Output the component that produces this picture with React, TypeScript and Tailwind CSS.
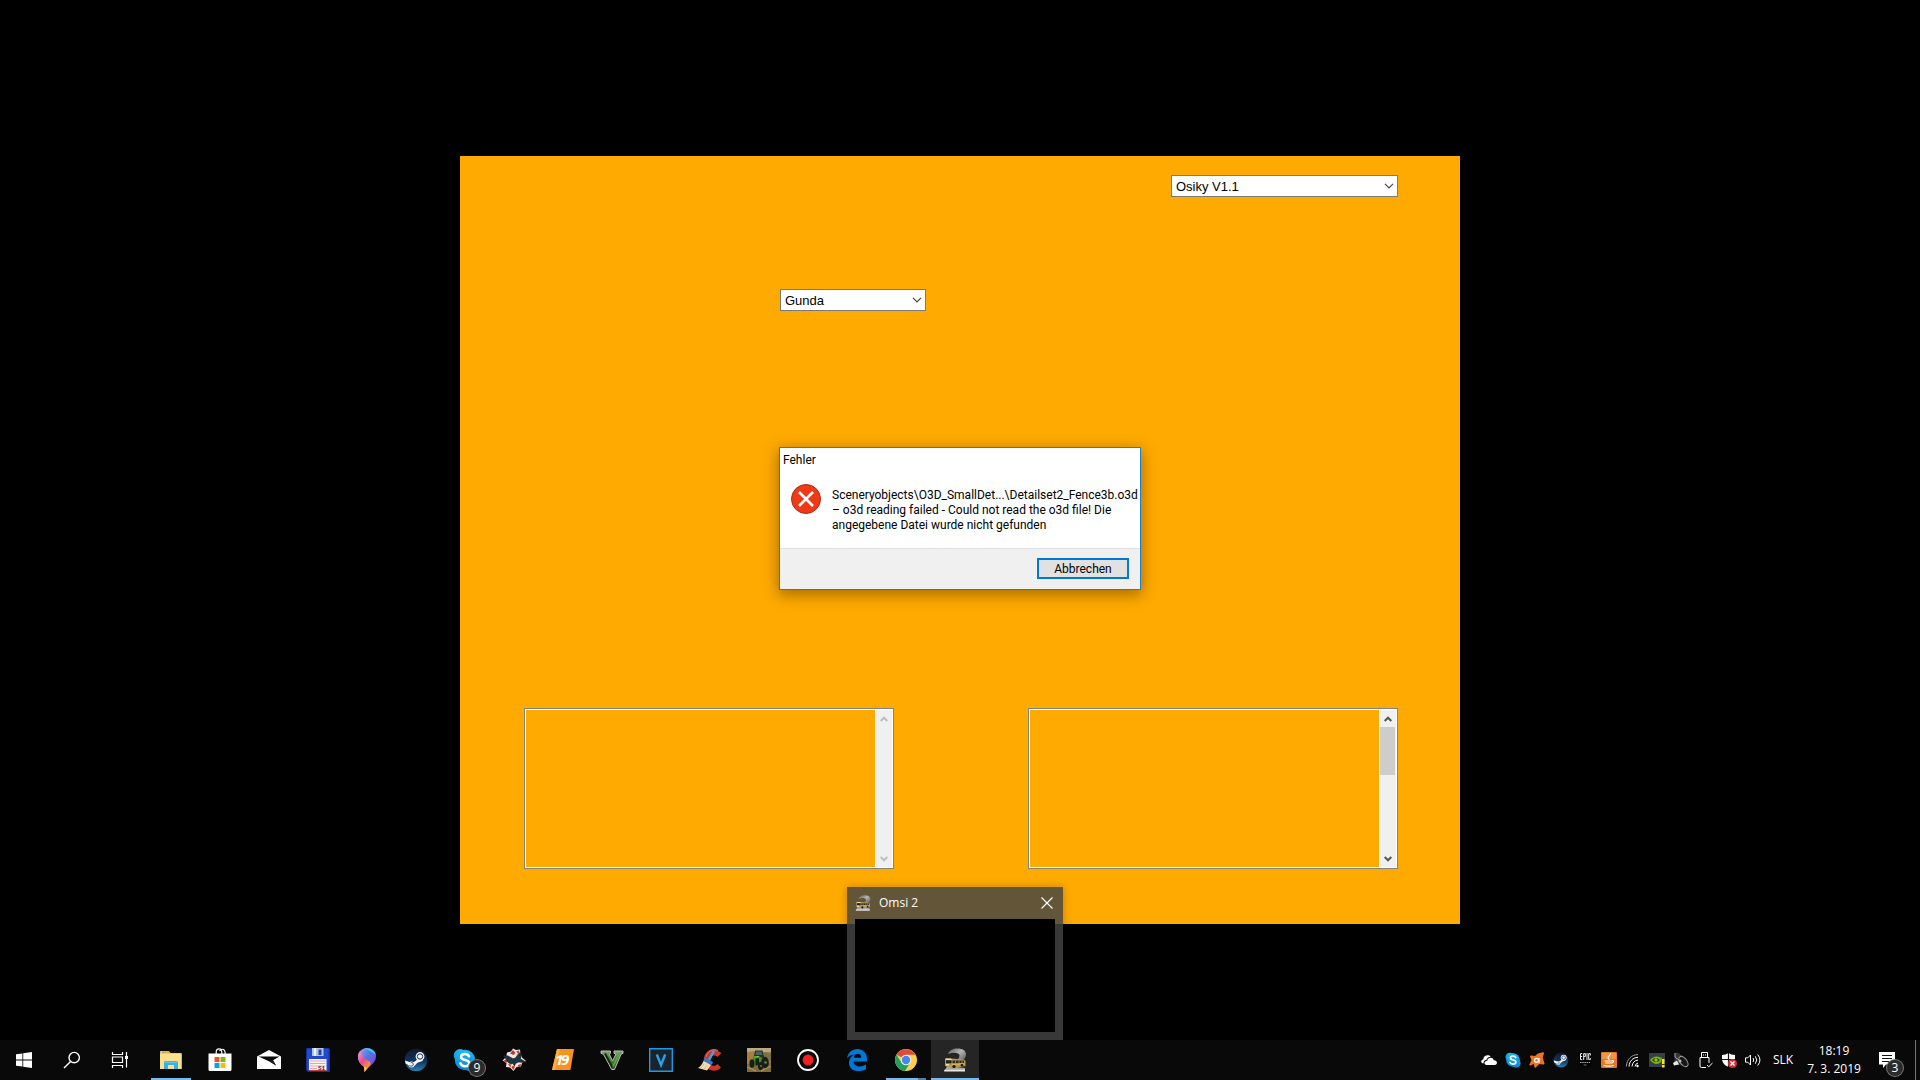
import React from 'react';

type P = { children: React.ReactNode; box?: string; className?: string };
const Svg = ({ children, box = '0 0 24 24', className = 'size-6' }: P) => (
  <svg viewBox={box} className={className} fill="none" aria-hidden="true">{children}</svg>
);

const StartIcon = () => (
  <Svg><g fill="#fff"><path d="M4 6.3 10.4 5.4V11.5H4z" /><path d="M11.2 5.3 20 4V11.5H11.2z" /><path d="M4 12.4H10.4V18.5L4 17.7z" /><path d="M11.2 12.4H20V20L11.2 18.7z" /></g></Svg>
);
const SearchIcon = () => (
  <Svg><g stroke="#fff" strokeWidth="1.4"><circle cx="14.2" cy="9.6" r="5.2" /><path d="M10.6 13.4 4 20" /></g></Svg>
);
const TaskViewIcon = () => (
  <Svg><g stroke="#fff" strokeWidth="1.2"><path d="M4.5 4v2.5h10V4M4.500 20v-2.500h10V20M4.500 9h10v5.500h-10zM18.500 4v15.500" /></g><path d="M17 8h3v3h-3z" fill="#fff" /></Svg>
);
const ExplorerIcon = () => (
  <Svg>
    <path d="M1 3.500q0-.5.500-.5H10l1.500 2H22q.6 0 .6.600V20.500q0 .5-.6.500H1.500q-.5 0-.5-.5z" fill="#e8b33c" />
    <path d="M1 5.500h21.600v15q0 .5-.6.500H1.500q-.5 0-.5-.5z" fill="#fde08c" />
    <path d="M2 3.700h3v1H2z" fill="#fff" /><path d="M3 3.700h2v1H3z" fill="#2f9cc9" />
    <path d="M5 21v-6.500q0-1.500 1.500-1.500h11q1.500 0 1.500 1.500V21h-4v-4H9v4z" fill="#38b0e3" />
    <path d="M6 13.800h12v1H6z" fill="#69cdf2" />
  </Svg>
);
const StoreIcon = () => (
  <Svg>
    <path d="M8.200 6V4.500Q8.200.8 11 .8t2.800 3.700V6M11.500 3Q14-.2 16.500 2.500q.7 1 .7 3.500" stroke="#fff" strokeWidth="1.200" />
    <path d="M.5 5.500h23V21.500q0 1.500-1.500 1.500H2Q.5 23 .5 21.500z" fill="#fff" />
    <path d="M6.500 9h5v5h-5z" fill="#f25022" /><path d="M12.500 9h5v5h-5z" fill="#7fba00" /><path d="M6.500 15h5v5h-5z" fill="#00a4ef" /><path d="M12.500 15h5v5h-5z" fill="#ffb900" />
  </Svg>
);
const MailIcon = () => (
  <Svg><path d="M0 8.500 12 2l12 6.500V21H0z" fill="#fff" /><path d="M1.500 8.500h21L16 12.200l3 5.400-6.500-4z" fill="#090909" /><path d="M12.500 13.600 16 12.200l3 5.400z" fill="#222" /></Svg>
);
const FloppyIcon = () => (
  <Svg>
    <path d="M1 0h21.500L24 1.500V24H2L0 22V1z" fill="#182f9e" /><path d="M1 .8h21.500v22H2L1 21.500z" fill="#1f49d2" />
    <path d="M6 0h11.500v8H6z" fill="#b7c5d6" /><path d="M8 0h2v8H8z" fill="#e9f3fa" /><path d="M12.500 1.500h3v5.500h-3z" fill="#1c43b5" />
    <path d="M3 11h17.500v12H3z" fill="#fdf4f2" /><path d="M4 13h15.500M4 15.500h15.500M4 18h15.500M4 20.500h7" stroke="#e9a5a5" />
    <path d="M3 22.500h17.500" stroke="#b83b4c" /><text x="12" y="21.500" fontSize="6" fontWeight="700" fill="#333" fontFamily="Liberation Mono">S1</text>
  </Svg>
);
const PaintIcon = () => (
  <Svg>
    <defs>
      <linearGradient id="pa" x1="0" y1="0" x2="1" y2=".8"><stop stopColor="#c99bf1" /><stop offset=".45" stopColor="#497fe8" /><stop offset="1" stopColor="#9634c9" /></linearGradient>
      <linearGradient id="pb" x1="0" y1="0" x2=".7" y2="1"><stop stopColor="#f0a3d8" /><stop offset=".5" stopColor="#e54b91" /><stop offset="1" stopColor="#ffa51f" /></linearGradient>
    </defs>
    <path d="M12 0c6 0 9 4 9 8.500C21 15 14 18 9.500 24L9 19C5 16 3 13 3 9c0-5 4-9 9-9z" fill="url(#pa)" />
    <path d="M3 9c0-3 1-5 2.500-6.500C6 8 10 11 14 13c2 1 2 3 .5 4.700C12.500 20 11 22 9.500 24L9 19C5 16 3 13 3 9z" fill="url(#pb)" />
    <path d="M9 .5c6-1.500 11 2.500 12 7-2-3-6-5-12-7z" fill="#35d3ee" />
    <path d="M9 18.500l3 1.500-2.500 4z" fill="#ffc52f" />
  </Svg>
);
const SteamIcon = ({ className }: { className?: string }) => (
  <Svg className={className}>
    <defs><linearGradient id="st" x1="0" y1="0" x2="0" y2="1"><stop stopColor="#15172e" /><stop offset=".55" stopColor="#11335c" /><stop offset="1" stopColor="#2d7fb5" /></linearGradient></defs>
    <circle cx="12" cy="12" r="11.200" fill="url(#st)" />
    <path d="M1 12.500l7.200 2.500 4-2.600 2.600-4.500 4.700 2-1 3-5 1.800-3.200 3.200Q8.500 20 6 18L1.600 15.500z" fill="#f4f7fa" />
    <circle cx="16" cy="8.500" r="4.400" fill="#f4f7fa" /><circle cx="16" cy="8.500" r="2.700" stroke="#17325a" strokeWidth="1" />
    <circle cx="7.500" cy="16.500" r="2.900" fill="#f4f7fa" /><path d="M5.500 17.400c1.500 1.500 3.800.8 3.800-1s-1.600-2.200-2.500-1.600" stroke="#17325a" strokeWidth=".9" />
  </Svg>
);
const SkypeIcon = ({ className }: { className?: string }) => (
  <Svg className={className}>
    <defs><linearGradient id="sk" x1="0" y1="0" x2="0" y2="1"><stop stopColor="#20b8f5" /><stop offset="1" stopColor="#0787d6" /></linearGradient></defs>
    <g fill="url(#sk)"><circle cx="7.200" cy="7.500" r="6.500" /><circle cx="16.800" cy="16.600" r="6.600" /></g><circle cx="12" cy="12" r="10.200" fill="url(#sk)" />
    <path d="M16 8.300C15.200 6.600 13.700 6 12 6 9.800 6 8 7.100 8 9c0 4 8.300 2 8.300 6 0 2-1.900 3.200-4.200 3.200-2.200 0-4-.9-4.600-2.800" stroke="#fff" strokeWidth="2.600" strokeLinecap="round" />
  </Svg>
);
const CardsIcon = () => (
  <Svg>
    <path d="M11 .5l3 1.500 4-.5.500 4 1.500 4 4 3.500-4 2-1 3.500-4.500.5L11.500 23l-3.500-3.500-4-.5.500-4L.5 12.500 4 9l1-4.500 4-1z" fill="#efe9e6" />
    <g fill="#c23a24"><path d="M11 2l2.500 3-2 2L8 5.500z" /><path d="M1.500 12.500l3.500-1.500 1 2.500-2 1.500z" /><path d="M6 16l3 .5-.5 3z" /><path d="M11 17.500l2 1-1.500 3.500-2-2.500z" /><path d="M16 17l3-1-.5 2.500-2.500.3z" /><path d="M14.500 3l2.800-.5-.3 2.500-1 1z" /></g>
    <path d="M1.500 8c2-1 4-.3 6 .8l3.500 1.900 2.500-.7c1-1.500 2.500-4 4.500-5.500l1.500.8-1 5.700 4.500 2.500-1 1-5.500-.5-3 1.500-1 2.500-1.500-2.500-2 .5c-2-.5-3.500-2-4-3.500z" fill="#1d3441" stroke="#101c24" strokeWidth=".6" />
  </Svg>
);
const FarmNineteenIcon = () => (
  <Svg>
    <path d="M6 1h17l-3.500 20.500Q19.200 22 18.500 22H1z" fill="#f7931e" /><path d="M6 1h3L4 22H1z" fill="#ffad3c" />
    <text y="17" fontSize="15" fontWeight="700" fontStyle="italic" fill="#fff" fontFamily="Open Sans"><tspan x="4">1</tspan><tspan x="10">9</tspan></text>
  </Svg>
);
const GtaIcon = () => (
  <Svg>
    <defs><linearGradient id="gt" x1="0" y1="0" x2="0" y2="1"><stop stopColor="#8b9c82" /><stop offset=".35" stopColor="#4b8a38" /><stop offset="1" stopColor="#2c5a22" /></linearGradient></defs>
    <path d="M1 3h9.500v2.300l-1.200.7 3.200 7L16 6l-2-.7V3h9v2.300l-2 1L14.500 21.500h-2.800L3.500 6.300 1 5.300z" fill="url(#gt)" stroke="#b9bdb5" strokeWidth="1" />
    <path d="M5 5.500l7.500 14" stroke="#1b2c14" strokeWidth="2" /><path d="M19 6l-6 12.500" stroke="#62a548" strokeWidth="1.500" />
  </Svg>
);
const VegasIcon = () => (
  <Svg><path d="M.7.7h22.600v22.600H.7z" fill="#1b222a" stroke="#189be8" strokeWidth="1.400" /><path d="M7.800 6.500l4.200 10.500 4.200-10.500" stroke="#1fa6f2" strokeWidth="2.400" /></Svg>
);
const CleanerIcon = () => (
  <Svg>
    <path d="M23.500 5 19.500 9C18 7 14.500 7 12.500 9c-2.500 3-1.500 7.500 1.500 8.500 2 .8 4.500 0 5.500-1.500l3.500 3.500c-3 3.500-8 4-12 2-5-2.500-6.500-8-4.500-13.500S15-1 19 2.500z" fill="#cf342b" />
    <path d="M20 2.500c-5-2-11 1-12 6.500" stroke="#ee7661" strokeWidth="1" />
    <path d="M15.500 3.500 11 12" stroke="#3aa4e7" strokeWidth="2.600" strokeLinecap="round" />
    <path d="M7 9.500l8 4.500-1.500 3-8-4z" fill="#2483cc" />
    <path d="M5.500 13l7.500 4L9 22.500 0 20q3.500-2 5.500-7z" fill="#f4d9b6" /><path d="M6 16l-3 4M8.500 17.500l-2.500 4" stroke="#d7a877" strokeWidth=".7" />
  </Svg>
);
const TractorIcon = () => (
  <Svg>
    <path d="M0 0h24v24H0z" fill="#94814e" /><path d="M0 0h24v4H0z" fill="#b9ab81" /><path d="M0 4l7-1v9l-7 2z" fill="#a9803a" /><path d="M17 4l7 2v7l-7-3z" fill="#7b7046" /><path d="M0 16l24-1v9H0z" fill="#826a3c" /><path d="M0 19l9 4M14 23l10-5" stroke="#bca05e" />
    <path d="M8 2.500h7.500l2 8H6.500z" fill="#25302c" /><path d="M9 3.500h5.500l1 3.500H8.500z" fill="#4f625b" />
    <path d="M6.500 9l5-1 4.500 2v6l-7 2-3-2z" fill="#3f8a29" /><path d="M8.500 10.500l3.500-.3V17l-3.500.5z" fill="#122312" /><path d="M7 9l5-.5" stroke="#8ccb4c" />
    <g fill="#1a1e19"><ellipse cx="5" cy="15.500" rx="2.500" ry="4.200" /><ellipse cx="18" cy="14.500" rx="3.800" ry="5.800" /><ellipse cx="13.500" cy="18" rx="2.600" ry="4" /></g><circle cx="18.500" cy="14.500" r="1.300" fill="#5a9039" /><circle cx="14" cy="18" r=".9" fill="#5a9039" />
  </Svg>
);
const RecordIcon = () => (
  <Svg><circle cx="12" cy="12" r="10" stroke="#fff" strokeWidth="1.800" /><circle cx="12" cy="12" r="5.400" fill="#f32020" /></Svg>
);
const EdgeIcon = () => (
  <Svg><path d="M2 10.500C3 4.500 7 1 12.300 1 18.500 1 22 5.500 22 11v2.500H8.500c.2 3.500 3 5 6 5 2.300 0 4.500-.7 6.500-2v4.700c-2 1.200-4.600 1.800-7.500 1.800C7.500 23 4 19.500 4 14.700c0-3.600 2-6.500 5.500-8C5.800 6.500 3.500 8.200 2 10.500zM8.700 9.700h7.500c0-2.500-1.200-4-3.500-4-2.200 0-3.600 1.600-4 4z" fill="#0078d7" /></Svg>
);
const ChromeIcon = () => (
  <Svg>
    <circle cx="12" cy="12" r="11" fill="#fdd04a" /><path d="M12 12 2.500 6.500A11 11 0 0 1 21.500 6.700H12z" fill="#dc4b3e" /><path d="M2.500 6.500A11 11 0 0 0 11 23l5.200-8.500L12 17l-4.600-2.600z" fill="#22a060" />
    <circle cx="12" cy="12" r="5.300" fill="#f5f5f2" /><circle cx="12" cy="12" r="4.200" fill="#4487f2" />
  </Svg>
);
const OmsiIcon = ({ className }: { className?: string }) => (
  <Svg className={className}>
    <defs><linearGradient id="om" x1="0" y1="0" x2="1" y2="1"><stop stopColor="#555" /><stop offset=".45" stopColor="#b5b5b5" /><stop offset="1" stopColor="#4d4d4d" /></linearGradient></defs>
    <path d="M5 6C6.500 2 10 .5 14.500.5c5 0 8.500 2 8.500 6 0 3-2 5-5 7l-6 1c2.500-2.500 4.500-4.500 4.500-7C16.500 4 10 4 5 6z" fill="url(#om)" />
    <path d="M4 18.500l18 1.500v3.500H1z" fill="#a9a9a9" /><path d="M1.500 21.800h20.500v1.500H1z" fill="#e6e6e6" />
    <path d="M2 10.500h6l13 1 1.500 1.500v5l-12 2.500-8.500-2.500z" fill="#b69a4c" />
    <path d="M2.500 10.500H8l1 1.500H3z" fill="#e8dcae" /><path d="M3 12.300h5.500v3H3z" fill="#1f2325" /><path d="M9.500 12.500h11.500v2.800H9.500z" fill="#2c2c25" />
    <path d="M12.500 12.500v3M16 12.500v3M19 12.500v3" stroke="#c9ae5c" strokeWidth=".7" />
    <path d="M3 16.300h3v1.200H3z" fill="#fff5cb" /><path d="M9 16.300l12-.5" stroke="#e0c163" /><circle cx="11" cy="18.500" r="1.600" fill="#151515" /><circle cx="19" cy="17.300" r="1.300" fill="#151515" />
  </Svg>
);

const CloudIcon = () => <Svg box="0 0 16 16" className="size-4"><path d="M2.500 11.500C-.5 11.500-.5 7.800 2.200 7.600 2.300 3.500 7.500 2 9.700 4.800c-2.400.2-3.700 1.500-4.200 3C3 8.300 2.300 10 2.500 11.500z" fill="#fff" /><path d="M5.500 13c-3-.5-2.500-4.300.7-4.300C7.200 5 11.800 5 12.700 8.300c4-.3 4.300 4.700 1 4.700z" fill="#fff" /></Svg>;
const AvastIcon = () => (
  <Svg box="0 0 16 16" className="size-4"><path d="M9 1.500l5-1.300q1.200 0 1 1.200l-1.300 4.100 1.800 6q0 1.200-1.200 1l-4-.5-3.500 3.500q-1 .8-1.300-.3l-.7-3.200-3.500 1.500q-1.200 0-.8-1.200l2-4L1 4.500q0-1.200 1.200-1L6 4z" fill="#f37021" /><circle cx="7.500" cy="8.300" r="2" stroke="#fff" strokeWidth="1.300" /><path d="M10 6v4.800" stroke="#fff" strokeWidth="1.300" /></Svg>
);
const EpicIcon = () => (
  <Svg box="0 0 16 16" className="size-4"><path d="M2 0h12v13l-6 3-6-3z" fill="#000" /><path d="M5.300 1.600H3.500v6h1.800M3.500 4.500h1.600M6.700 8V1.600h1.600v3H6.700M10 1v7M13.300 3.500V1.600h-1.600v6h1.600V6" stroke="#eee" strokeWidth="1" /><path d="M3 10.500h10" stroke="#aaa" strokeDasharray="1.500 .7" /><path d="M6.500 13h3" stroke="#777" /></Svg>
);
const JavaIcon = () => (
  <Svg box="0 0 16 16" className="size-4"><rect width="16" height="16" rx="1" fill="#e87722" /><path d="M1 1h14v6H1z" fill="#f39443" /><g stroke="#fff" strokeWidth="1.100" strokeLinecap="round"><path d="M9.500 1.500C10 3.500 6.500 4 7 6l1 1.500M4 9h6.500M4.500 11h5.500M3 13.500q5 1.300 9.500 0M11 8.800q2-.5 1.500.8t-2 1.400" /></g></Svg>
);
const WifiIcon = () => (
  <Svg box="0 0 16 16" className="size-4"><g stroke="#fff" strokeWidth="1"><path d="M7 14.500C7.500 10.500 9.500 8.500 13 8" /><path d="M4 14.500C4.500 9 7.500 5.700 13 5.300" /><path d="M10 14.500q.5-3 3-3.500" /></g><path d="M1.300 14.500C2 7 6 3 13 2.500" stroke="#999" /><circle cx="12.500" cy="14" r="1.200" fill="#fff" /></Svg>
);
const NvidiaIcon = () => (
  <Svg box="0 0 16 16" className="size-4"><path d="M0 1h16v14H0z" fill="#363e49" /><path d="M1 8q5-6 12-2l-1 4q-5 5-11-2z" fill="#76b900" /><path d="M3 8q4-4 8 0-4 4-8 0z" fill="#26301b" /><circle cx="7" cy="8" r="1.700" fill="#85cc13" /><path d="M13 7h2.500v5H13zM13 13h2.500v2.500H13z" fill="#ffe600" /></Svg>
);
const SpeakerIcon = () => (
  <Svg box="0 0 16 16" className="size-4"><path d="M2 1l3-.5 8 6.500 2.500 6-1.500 1.500-4-.5-9-3z" fill="#353535" /><ellipse cx="10.500" cy="9.500" rx="3.300" ry="6" transform="rotate(-38 10.500 9.500)" fill="#171717" stroke="#a5a5a5" /><path d="M2 1v4l4 3" stroke="#aaa" /><path d="M0 11l4-2.500 2 4-5 1z" fill="#e7e7e7" /><circle cx="7" cy="9" r="1.500" fill="#bbb" /></Svg>
);
const UsbIcon = () => (
  <Svg box="0 0 16 16" className="size-4"><g stroke="#fff"><path d="M4.500 5.500v-5h6v5M9 15.500H4.500q-1.500 0-1.500-1.500V5.500h9V11M10 13l1.700 1.800L15.500 11" /><path d="M6.500 2.500v1M8.500 2.500v1" /></g></Svg>
);
const ShieldIcon = () => (
  <Svg box="0 0 16 16" className="size-4"><path d="M7.500 1Q10 3 14 3v4q0 5-6.500 8Q1 12 1 7V3q4 0 6.500-2z" fill="#fff" /><path d="M7.500 1v14M1 7.500h13" stroke="#111" strokeWidth="1.200" /><circle cx="11.500" cy="11.500" r="4.500" fill="#d32f38" /><path d="M9.500 9.500l4 4m0-4l-4 4" stroke="#fff" strokeWidth="1.300" /></Svg>
);
const VolumeIcon = () => (
  <Svg box="0 0 16 16" className="size-4"><g stroke="#fff"><path d="M.5 5.800h2.300L5.500 3v10L2.800 10.200H.5z" /><path d="M8 6q1.500 2 0 4M10.300 4.300q3 3.700 0 7.400M12.700 2.500q4.500 5.500 0 11" /></g></Svg>
);

const pinned: { name: string; icon: React.ReactNode; state?: 'open' | 'stack' | 'active'; badge?: string }[] = [
  { name: 'Explorer', icon: <ExplorerIcon />, state: 'open' },
  { name: 'Store', icon: <StoreIcon /> },
  { name: 'Mail', icon: <MailIcon /> },
  { name: 'Commander', icon: <FloppyIcon /> },
  { name: 'Paint 3D', icon: <PaintIcon /> },
  { name: 'Steam', icon: <SteamIcon /> },
  { name: 'Skype', icon: <SkypeIcon />, badge: '9' },
  { name: 'Cards', icon: <CardsIcon /> },
  { name: 'Farming 19', icon: <FarmNineteenIcon /> },
  { name: 'GTA V', icon: <GtaIcon /> },
  { name: 'Vegas', icon: <VegasIcon /> },
  { name: 'Cleaner', icon: <CleanerIcon /> },
  { name: 'Farming', icon: <TractorIcon /> },
  { name: 'Recorder', icon: <RecordIcon /> },
  { name: 'Edge', icon: <EdgeIcon /> },
  { name: 'Chrome', icon: <ChromeIcon />, state: 'stack' },
  { name: 'Omsi 2', icon: <OmsiIcon />, state: 'active' },
];

const tray = [
  { name: 'OneDrive', icon: <CloudIcon /> },
  { name: 'Skype', icon: <SkypeIcon className="size-4" /> },
  { name: 'Avast', icon: <AvastIcon /> },
  { name: 'Steam', icon: <SteamIcon className="size-4" /> },
  { name: 'Epic Games', icon: <EpicIcon /> },
  { name: 'Java', icon: <JavaIcon /> },
  { name: 'Network', icon: <WifiIcon /> },
  { name: 'Nvidia', icon: <NvidiaIcon /> },
  { name: 'Audio manager', icon: <SpeakerIcon /> },
  { name: 'Eject', icon: <UsbIcon /> },
  { name: 'Security', icon: <ShieldIcon /> },
  { name: 'Volume', icon: <VolumeIcon /> },
];

const Badge = ({ children, className }: { children: string; className: string }) => (
  <span className={`absolute top-5 flex size-4 items-center justify-center rounded-full bg-[#2b2b2b] leading-4 text-white ring-1 ring-[#777] ${className}`}>{children}</span>
);

const Combo = ({ label, value, className }: { label: string; value: string; className: string }) => (
  <div className={`relative ${className}`}>
    <select aria-label={label} className="block h-[22px] w-full appearance-none border border-[#7a7a7a] bg-white pt-px pl-1 font-['Liberation_Sans',sans-serif] text-[13px] leading-5 text-black">
      <option>{value}</option>
    </select>
    <svg viewBox="0 0 10 6" className="pointer-events-none absolute top-2 right-1 h-1.5 w-2.5" fill="none" aria-hidden="true"><path d="M1 .8l4 4 4-4" stroke="#444" strokeWidth="1.200" /></svg>
  </div>
);

const ListPane = ({ label, active }: { label: string; active?: boolean }) => (
  <section aria-label={label} className="flex h-[161px] w-[370px] border border-[#828282]">
    <div className="flex flex-1 border border-white">
      <div className="flex-1 border-r border-white" />
      <div className={`flex w-4 flex-col justify-between bg-[#f0f0f0] ${active ? 'text-[#555]' : 'text-[#bdbdbd]'}`}>
        <div>
          <button aria-label={`${label} up`} className="flex h-[17px] w-full items-center justify-center pr-px">
            <svg viewBox="0 0 8 6" className="h-1.5 w-2" fill="none" aria-hidden="true"><path d="M.7 5 4 1.700 7.300 5" stroke="currentColor" strokeWidth="2" /></svg>
          </button>
          {active && <div className="mr-px h-12 bg-[#cdcdcd]" />}
        </div>
        <button aria-label={`${label} down`} className="flex h-[17px] w-full items-center justify-center pr-px">
          <svg viewBox="0 0 8 6" className="h-1.5 w-2" fill="none" aria-hidden="true"><path d="M.7 1 4 4.300 7.300 1" stroke="currentColor" strokeWidth="2" /></svg>
        </button>
      </div>
    </div>
  </section>
);

export default function App() {
  return (
    <div className="relative flex min-h-screen flex-col overflow-hidden bg-black font-['Open_Sans','Noto_Sans',sans-serif] text-xs">
      <main className="absolute inset-0 flex items-center justify-center">
        <div className="flex h-[768px] w-[1000px] flex-col bg-[#ffaa00] pt-[19px] pr-[62px] pb-[55px] pl-16">
          <Combo label="Karte" value="Osiky V1.1" className="w-[227px] self-end" />
          <Combo label="Fahrer" value="Gunda" className="mt-[92px] ml-64 w-[146px]" />
          <div className="mt-auto flex justify-between">
            <ListPane label="Liste links" />
            <ListPane label="Liste rechts" active />
          </div>
        </div>
      </main>

      <div role="alertdialog" aria-labelledby="dialog-title" className="absolute top-[447px] left-1/2 flex h-[143px] w-[362px] -translate-x-[181px] flex-col border border-[#1b7fcb] bg-white font-['Roboto','Open_Sans',sans-serif] text-black shadow-[0_4px_14px_1px_rgba(0,0,0,0.35)]">
        <h1 id="dialog-title" className="pt-1 pl-[3px] leading-4">Fehler</h1>
        <div className="flex flex-1 gap-[11px] pt-4 pl-[11px]">
          <Svg box="0 0 30 30" className="size-[30px] shrink-0"><circle cx="15" cy="15" r="14.500" fill="#f03a17" stroke="#a82b1a" /><path d="M8 8l14 14M22 8 8 22" stroke="#fff" strokeWidth="2.600" /></Svg>
          <p className="pt-1 leading-[15px] whitespace-nowrap">
            Sceneryobjects\O3D_SmallDet...\Detailset2_Fence3b.o3d<br />
            – o3d reading failed - Could not read the o3d file! Die<br />
            angegebene Datei wurde nicht gefunden
          </p>
        </div>
        <div className="flex h-[41px] items-start justify-end border-t border-[#dfdfdf] bg-[#f0f0f0] pt-[9px] pr-[11px]">
          <button className="h-[21px] w-[92px] border-2 border-[#0078d7] bg-[#e1e1e1] leading-4">Abbrechen</button>
        </div>
      </div>

      <section aria-label="Omsi 2" className="absolute top-[887px] left-[847px] flex h-[153px] w-[216px] flex-col bg-[#434343]/83 px-2 pb-2 text-white shadow-[0_0_8px_rgba(0,0,0,0.25)]">
        <div className="flex h-8 items-center">
          <OmsiIcon className="size-4" />
          <span className="ml-2 flex-1">Omsi 2</span>
          <button aria-label="Close" className="pr-0.5"><Svg box="0 0 12 12" className="size-3"><path d="M.5.5l11 11M11.500.5l-11 11" stroke="#fff" strokeWidth="1.200" /></Svg></button>
        </div>
        <div className="flex-1 bg-black" />
      </section>

      <footer className="relative mt-auto flex h-10 items-stretch bg-[#090909] text-white">
        <button aria-label="Start" className="flex w-12 items-center justify-center"><StartIcon /></button>
        <button aria-label="Search" className="flex w-12 items-center justify-center"><SearchIcon /></button>
        <button aria-label="Task view" className="mr-[3px] flex w-12 items-center justify-center"><TaskViewIcon /></button>
        <nav aria-label="Apps" className="flex gap-px">
          {pinned.map((a) => (
            <button key={a.name} aria-label={a.name} className={`relative flex w-12 items-center justify-center ${a.state === 'active' ? 'bg-[#252525]' : ''}`}>
              {a.icon}
              {a.badge && <Badge className="left-7">{a.badge}</Badge>}
              {a.state === 'open' && <span className="absolute inset-x-1 bottom-0 h-0.5 bg-[#76b9ed]" />}
              {a.state === 'active' && <span className="absolute inset-x-0 bottom-0 h-0.5 bg-[#76b9ed]" />}
              {a.state === 'stack' && <span className="absolute inset-x-1 bottom-0 h-0.5 border-r-8 border-[#527fa3] bg-[#76b9ed]" />}
            </button>
          ))}
        </nav>
        <div className="ml-auto flex">
          {tray.map((t) => (
            <button key={t.name} aria-label={t.name} className="flex w-6 items-center justify-center">{t.icon}</button>
          ))}
        </div>
        <button className="w-9 text-center">SLK</button>
        <div className="flex w-[66px] flex-col justify-center text-center leading-[18px] whitespace-nowrap"><span>18:19</span><span>7. 3. 2019</span></div>
        <button aria-label="Notifications" className="relative flex w-12 items-center pl-3">
          <Svg box="0 0 16 16" className="size-4"><path d="M0 0h16v12.500H7L4 16v-3.500H0z" fill="#fff" /><path d="M3 3.500h10M3 6.500h10M3 9.500h7" stroke="#111" /></Svg>
          <Badge className="left-5">3</Badge>
        </button>
        <button aria-label="Show desktop" className="w-[5px] border-l border-[#777]" />
      </footer>
    </div>
  );
}
